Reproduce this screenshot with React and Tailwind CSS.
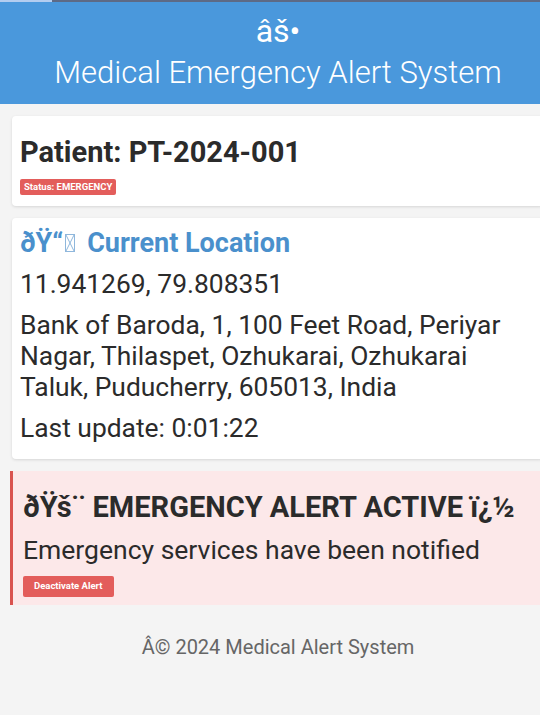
import React from "react";

const App = () => {
  return (
    <div className="min-h-[715px] bg-[#f4f4f4] overflow-hidden">
      <div
        className="w-[556px] text-[#2b2b2b]"
        style={{ fontFamily: "Roboto, 'Noto Sans', sans-serif" }}
      >
        {/* Top loading strip */}
        <div className="flex h-[2px] bg-[#5d6a86]">
          <div className="w-[52px] bg-[#b3cdf0]" />
        </div>

        {/* Header */}
        <header className="bg-[#4a98dc] text-white text-center pt-[12px] pb-[9px]">
          <div className="text-[32px] leading-[34px]">âš•</div>
          <h1 className="mt-[3px] text-[31px] font-light leading-[44px]">
            Medical Emergency Alert System
          </h1>
        </header>

        <main className="px-3 pt-3 flex flex-col gap-3">
          {/* Patient card */}
          <section className="bg-white rounded-[4px] shadow-[0_1px_3px_rgba(0,0,0,0.12)] pl-2 pt-[19px] pb-[9px]">
            <h2 className="text-[29px] font-bold leading-[34px]">Patient: PT-2024-001</h2>
            <span className="inline-block mt-[10px] bg-[#e35d5b] text-white text-[9.5px] font-bold leading-[16px] px-[4px] rounded-[2px]">
              Status: EMERGENCY
            </span>
          </section>

          {/* Location card */}
          <section className="bg-white rounded-[4px] shadow-[0_1px_3px_rgba(0,0,0,0.12)] pl-2 pt-[9px] pb-[15px] pr-10 text-[26.4px] leading-[31px]">
            <h3 className="text-[27px] font-bold text-[#4a90cc] leading-[32px] mb-[10px] flex items-center">
              <span>ðŸ“</span>
              <svg width="10" height="18" viewBox="0 0 10 18" className="ml-[2px] mr-[12px]" fill="none" stroke="#8fb7dc" strokeWidth="1">
                <rect x="0.5" y="0.5" width="9" height="17" />
                <path d="M1 1 L9 17 M9 1 L1 17" />
              </svg>
              <span>Current Location</span>
            </h3>
            <p className="mb-[10px]">11.941269, 79.808351</p>
            <p className="mb-[10px]">
              Bank of Baroda, 1, 100 Feet Road, Periyar Nagar, Thilaspet, Ozhukarai, Ozhukarai Taluk, Puducherry, 605013, India
            </p>
            <p>Last update: 0:01:22</p>
          </section>

          {/* Alert box */}
          <section className="-ml-[2px] bg-[#fce8e9] border-l-[3px] border-[#d9534f] pl-[10px] pt-[19px] pb-[8px] flex flex-col items-start">
            <h3 className="text-[29px] font-bold leading-[34px]">ðŸš¨ EMERGENCY ALERT ACTIVE ï¿½</h3>
            <p className="text-[26.5px] leading-[32px] mt-[10px]">Emergency services have been notified</p>
            <button className="mt-[10px] h-[21px] bg-[#e35d5b] text-white text-[9.5px] font-bold px-[11px] rounded-[2px]">
              Deactivate Alert
            </button>
          </section>

          {/* Footer */}
          <footer className="text-center text-[20px] leading-[28px] text-[#666] pt-[16px]">
            Â© 2024 Medical Alert System
          </footer>
        </main>
      </div>
    </div>
  );
};

export default App;
